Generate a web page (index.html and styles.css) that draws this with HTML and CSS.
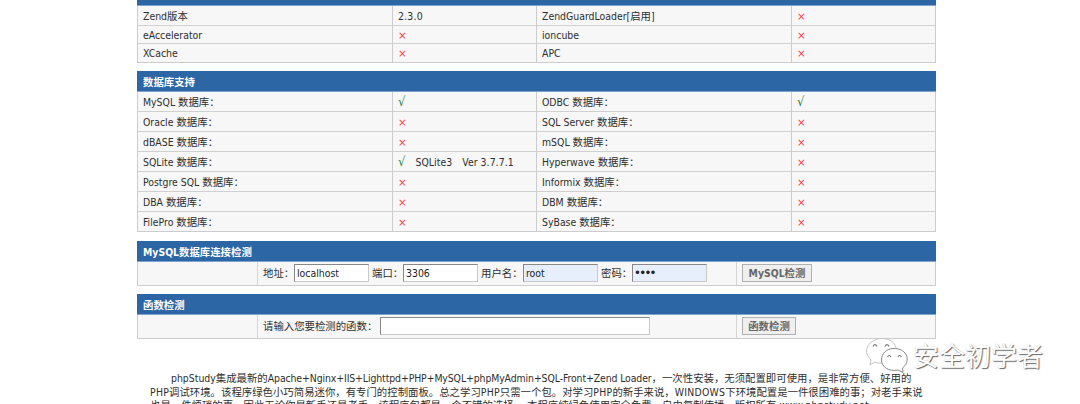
FILE: index.html
```
<!DOCTYPE html>
<html lang="zh-CN">
<head>
<meta charset="utf-8">
<title>phpStudy 探针</title>
<link rel="stylesheet" href="styles.css">
</head>
<body>
<main class="page">
  <section class="table first">
    <h2 class="head cut"></h2>
    <div class="row r21"><span>Zend版本</span><span class="num">2.3.0</span><span>ZendGuardLoader[启用]</span><span class="no">×</span></div>
    <div class="row r18"><span>eAccelerator</span><span class="no">×</span><span>ioncube</span><span class="no">×</span></div>
    <div class="row r19"><span>XCache</span><span class="no">×</span><span>APC</span><span class="no">×</span></div>
  </section>
  <section class="table second">
    <h2 class="head">数据库支持</h2>
    <div class="row"><span>MySQL 数据库：</span><span class="yes">√</span><span>ODBC 数据库：</span><span class="yes">√</span></div>
    <div class="row"><span>Oracle 数据库：</span><span class="no">×</span><span>SQL Server 数据库：</span><span class="no">×</span></div>
    <div class="row"><span>dBASE 数据库：</span><span class="no">×</span><span>mSQL 数据库：</span><span class="no">×</span></div>
    <div class="row"><span>SQLite 数据库：</span><span><b class="yes">√</b><i class="ver">SQLite3</i><i class="ver">Ver 3.7.7.1</i></span><span>Hyperwave 数据库：</span><span class="no">×</span></div>
    <div class="row"><span>Postgre SQL 数据库：</span><span class="no">×</span><span>Informix 数据库：</span><span class="no">×</span></div>
    <div class="row"><span>DBA 数据库：</span><span class="no">×</span><span>DBM 数据库：</span><span class="no">×</span></div>
    <div class="row r19"><span>FilePro 数据库：</span><span class="no">×</span><span>SyBase 数据库：</span><span class="no">×</span></div>
  </section>
  <section class="table third">
    <h2 class="head">MySQL数据库连接检测</h2>
    <div class="form"><span></span>
      <span class="fields">
        <label class="l1">地址：</label><input class="box" value="localhost">
        <label class="l2">端口：</label><input class="box" value="3306">
        <label class="l3">用户名：</label><input class="box filled" value="root">
        <label class="l4">密码：</label><input class="box filled dots" type="password" value="root">
      </span>
      <span><button class="btn b1">MySQL检测</button></span></div>
  </section>
  <section class="table fourth">
    <h2 class="head">函数检测</h2>
    <div class="form"><span></span>
      <span class="fields"><label class="l5">请输入您要检测的函数：</label><input class="box wide"></span>
      <span><button class="btn b2">函数检测</button></span></div>
  </section>
  <footer class="note">
    <p class="n1">phpStudy集成最新的<span class="tight">Apache+Nginx+IIS+Lighttpd+PHP+MySQL+phpMyAdmin+SQL-Front+Zend Loader</span>，一次性安装，无须配置即可使用，是非常方便、好用的</p>
    <p class="n2"><span class="loose">PHP</span>调试环境。该程序绿色小巧简易迷你，有专门的控制面板。总之学习<span class="loose">PHP</span>只需一个包。对学习<span class="loose">PHP</span>的新手来说，<span class="loose">WINDOWS</span>下环境配置是一件很困难的事；对老手来说</p>
    <p class="n3">也是一件烦琐的事，因此无论你是新手还是老手，该程序包都是一个不错的选择。 本程序纯绿色使用完全免费，自由复制传播，版权所有 <span class="site">www.phpstudy.net</span></p>
  </footer>
</main>
<div class="mark">
  <svg class="wechat" width="46" height="40" viewBox="0 0 46 40">
    <path d="M17 26C14 26.500 12 26 10 25L5 28L6 23C-2 16 1 4 15 1.500C24 1 30 5 31 11" class="bubble faint"/>
    <path d="M29 11.500C21 11.500 16.500 17 16.500 23C16.500 30 24 35 33 33L38 35.500L37.500 31C43 27 43.500 20 40 16C37 12.500 33 11.500 29 11.500Z" class="bubble"/>
    <path d="M8 9.500q2-4 4 0M20 9.500q2-4 4 0M22.500 20q1.500-3 3.500 0M33 20q1.500-3 3.500 0" class="eyes"/>
  </svg>
  <span class="marktext">安全初学者</span>
</div>
</body>
</html>
```
FILE: styles.css
```
* { box-sizing: border-box; }
body {
  margin: 0;
  width: 1080px;
  height: 404px;
  overflow: hidden;
  position: relative;
  background: #fff;
  color: #2e2e2e;
  font: 10.4px/18px "DejaVu Sans Condensed", "Noto Sans CJK SC", sans-serif;
}
.page { width: 799px; margin-left: 137px; }
.table { border: 1px solid #ccc; border-top: 0; background: #f7f7f7; }
.head {
  height: 21px;
  margin: 0 -1px;
  padding-left: 6px;
  border-bottom: 1px solid #7fa3cd;
  background: #2c66a5;
  color: #fff;
  font-size: 10.4px;
  line-height: 22px;
  font-weight: bold;
}
.head.cut { height: 6px; }
.second { margin-top: 8px; }
.third { margin-top: 9px; }
.fourth { margin-top: 8px; }
.row { display: grid; grid-template-columns: 255px 144px 255px 143px; height: 20px; }
.row > span {
  border-bottom: 1px solid #d0d0d0;
  border-right: 1px solid #ccc;
  padding-left: 5px;
  line-height: 20px;
  white-space: nowrap;
  overflow: hidden;
}
.row > span:last-child { border-right: 0; }
.row:last-child > span { border-bottom: 0; }
.row.r18 { height: 18px; }
.r18 > span, .first .r19 > span { line-height: 18px; }
.row.r19 { height: 19px; }
.first .row.r19 { height: 18px; }
.num { letter-spacing: 0.2px; }
.row .no { color: #ff3b45; font-family: "DejaVu Sans", sans-serif; font-size: 10.4px; }
.row .yes { color: #27833c; font-weight: normal; font-size: 13px; }
.row b.yes { line-height: 1; }
.ver { font-style: normal; margin-left: 10px; letter-spacing: 0.05px; }
.form { display: grid; grid-template-columns: 120px 479px 198px; height: 23px; }
.form > span { border-right: 1px solid #d5d5d5; display: flex; align-items: center; padding: 0 0 2px 5px; }
.form > span:last-child { border-right: 0; }
.fields label { flex: none; white-space: nowrap; }
.l1 { width: 31px; }
.l2, .l4 { width: 31px; margin-left: 3px; }
.l3 { width: 42px; margin-left: 3px; }
.l5 { width: 117px; }
.box {
  width: 75px;
  height: 18px;
  padding: 0 2px;
  border: 1px solid #c8c8c8;
  border-top: 1px solid #888;
  border-left: 1px solid #888;
  background: #fff;
  color: #222;
  font: inherit;
}
.filled { background: #e8effc; }
.dots { font-size: 13px; padding-left: 1px; letter-spacing: -1.7px; }
.wide { width: 270px; }
.btn {
  height: 18px;
  padding: 0;
  border: 1px solid #b0b0b0;
  border-radius: 0;
  background: #efefef;
  color: #666;
  font: bold 10.4px/16px "DejaVu Sans Condensed", "Noto Sans CJK SC", sans-serif;
}
.b1 { width: 70px; }
.b2 { width: 54px; }
.note { margin: 32px 0 0 13px; line-height: 14px; white-space: nowrap; }
.note p { margin: 0; }
.note .n1 { margin-left: 21px; }
.note .n3 { margin-top: -1px; }
.tight { letter-spacing: -0.1px; }
.loose { letter-spacing: 0.25px; }
.site { letter-spacing: 0.25px; }
.mark { position: absolute; left: 865px; top: 337px; display: flex; }
.wechat { display: block; }
.bubble { fill: #fff; stroke: #888; stroke-width: 1; }
.faint { stroke: #c4c4c4; }
.eyes { fill: none; stroke: #777; stroke-width: 1.2; }
.marktext {
  margin-left: 2px;
  color: #fff;
  font: 26px/36px "Noto Sans CJK SC", sans-serif;
  text-shadow: 1px 1px 1px #666, 0 0 1px #bbb;
}
```
